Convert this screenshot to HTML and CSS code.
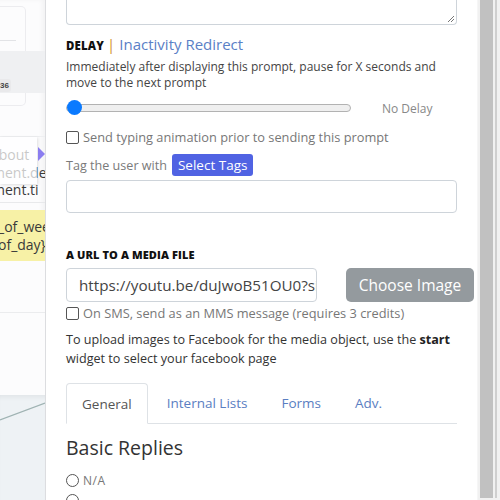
FILE: index.html
```html
<!DOCTYPE html>
<html>
<head>
<meta charset="utf-8">
<link rel="stylesheet" href="styles.css">
</head>
<body>
<div class="page">
  <div class="bg">
    <div class="bg-top">
      <div class="bg-card">
        <div class="bg-card-line"></div>
        <div class="bg-band"><span class="badge">36</span></div>
      </div>
    </div>
    <div class="bg-list">
      <div class="bg-t lt">about</div>
      <div class="bg-t dark">tment.de</div>
      <div class="bg-t dark">tment.ti</div>
      <div class="bg-pop"></div>
    </div>
    <div class="bg-yellow">
      <div class="bg-t dark">_of_wee</div>
      <div class="bg-t dark">of_day}}</div>
    </div>
    <div class="bg-blank"></div>
    <div class="bg-canvas">
      <svg width="45" height="105" viewBox="0 0 45 105"><line x1="0" y1="25" x2="45" y2="8" stroke="#9fb3b3" stroke-width="1.2"/></svg>
    </div>
  </div>
  <div class="panel">
    <div class="textarea"><svg class="grip" width="9" height="9" viewBox="0 0 9 9"><line x1="8" y1="2" x2="2" y2="8" stroke="#777" stroke-width="1"/><line x1="8" y1="5" x2="5" y2="8" stroke="#777" stroke-width="1"/></svg></div>

    <div class="delay-head"><b>DELAY</b><span class="pipe">|</span><span class="link">Inactivity Redirect</span></div>
    <p class="desc">Immediately after displaying this prompt, pause for X seconds and move to the next prompt</p>
    <div class="slider-row">
      <div class="track"><span class="thumb"></span></div>
      <span class="nodelay">No Delay</span>
    </div>
    <label class="check"><span class="box"></span>Send typing animation prior to sending this prompt</label>
    <div class="tag-row">Tag the user with <span class="btn-tags">Select Tags</span></div>
    <div class="input"></div>

    <div class="media-head">A URL TO A MEDIA FILE</div>
    <div class="media-row">
      <div class="url">https://youtu.be/duJwoB51OU0?si</div>
      <div class="btn-choose">Choose Image</div>
    </div>
    <label class="check sms"><span class="box"></span>On SMS, send as an MMS message (requires 3 credits)</label>
    <p class="fb">To upload images to Facebook for the media object, use the <b>start</b> widget to select your facebook page</p>

    <div class="tabs">
      <span class="tab active">General</span>
      <span class="tab">Internal Lists</span>
      <span class="tab">Forms</span>
      <span class="tab">Adv.</span>
    </div>
    <h2 class="replies">Basic Replies</h2>
    <label class="radio"><span class="circ"></span>N/A</label>
    <label class="radio"><span class="circ"></span></label>
  </div>
  <div class="scroll"><div class="thumb-bar"></div></div>
</div>
</body>
</html>
```
FILE: styles.css
```css
html, body { margin: 0; padding: 0; }
body { width: 500px; height: 500px; overflow: hidden; font-family: "Open Sans", "Liberation Sans", sans-serif; background: #fff; }
.page { display: flex; height: 500px; }

.bg { width: 45px; flex: none; overflow: hidden; background: #fcfcfd; border-right: 1px solid #dcdde0; box-shadow: inset -3px 0 4px rgba(0,0,0,0.04); display: flex; flex-direction: column; }
.bg-top { height: 136px; flex: none; }
.bg-card { margin-top: 6px; width: 26px; height: 100px; border: 1px solid #ececef; border-left: none; border-radius: 0 5px 5px 0; box-sizing: border-box; }
.bg-card-line { margin-top: 33px; width: 16px; border-top: 1px solid #e2e3e6; }
.bg-band { margin-top: 10px; width: 45px; height: 42px; background: #eff0f2; display: flex; align-items: flex-end; }
.badge { font: bold 8px "Liberation Sans", sans-serif; color: #444; background: #e9e9eb; padding: 2px 2px 2px 0; margin-bottom: 1px; border-radius: 0 3px 3px 0; }
.bg-list { flex: none; border-top: 1px solid #eeeff1; height: 67px; border-bottom: 1px solid #e8e9eb; box-sizing: border-box; padding-top: 9px; position: relative; }
.bg-pop { position: absolute; left: 0; top: 0; width: 37px; height: 47px; background: rgba(255,255,255,0.72); box-shadow: 1px 1px 3px rgba(0,0,0,0.12); }
.bg-pop::after { content: ""; position: absolute; left: 38px; top: 10px; border-left: 7px solid #8b7df0; border-top: 7px solid transparent; border-bottom: 7px solid transparent; }
.bg-t { font-size: 14px; line-height: 17.5px; white-space: nowrap; margin-left: -13px; color: #3a3a3a; }
.bg-t.lt { margin-left: -9px; }
.bg-yellow { flex: none; margin-top: 7px; height: 51px; background: #f7f1a6; padding-top: 8px; box-sizing: border-box; }
.bg-yellow .bg-t { margin-left: -2px; }
.bg-blank { flex: none; height: 134px; background: #fcfcfd; }
.bg-blank::before { content: ""; display: block; margin-top: 51px; border-top: 1px solid #ebecee; }
.bg-canvas { flex: 1; background: #eef2f5; box-shadow: inset 0 5px 5px -3px rgba(0,0,0,0.06); }
.bg-canvas svg { display: block; }

.panel { flex: 1; padding: 0 20px; overflow: hidden; color: #333; }
.textarea { height: 24px; border: 1px solid #ced4da; border-top: none; border-radius: 0 0 4px 4px; position: relative; }
.grip { position: absolute; right: 1px; bottom: 1px; }

.delay-head { margin-top: 9px; font-size: 15px; line-height: 20px; }
.delay-head b { font-size: 11.4px; font-weight: 800; color: #111; letter-spacing: 0.2px; }
.pipe { color: #d4912a; margin-left: 3px; }
.link { color: #5a80c6; margin-left: 4px; }
.desc { margin: 3px 0 0; font-size: 12px; line-height: 16px; color: #444; max-width: 378px; }
.slider-row { display: flex; align-items: center; margin-top: 9px; height: 16px; }
.track { width: 283px; height: 6px; background: #efefef; border: 1px solid #b2b2b2; border-radius: 4px; position: relative; }
.thumb { position: absolute; left: 0; top: -5px; width: 15px; height: 15px; border-radius: 50%; background: #0a7aff; }
.nodelay { margin-left: 31px; font-size: 12px; color: #888; }

.check { display: flex; align-items: center; margin-top: 13px; font-size: 12.8px; color: #777; line-height: 16px; }
.box { width: 11px; height: 11px; border: 1px solid #555; border-radius: 2px; margin-right: 4px; flex: none; }
.tag-row { display: flex; align-items: center; margin-top: 9px; font-size: 12.6px; color: #7a7a7a; gap: 5px; }
.btn-tags { background: #5063e3; color: #fff; font-size: 13.5px; padding: 2px 6px; border-radius: 3px; line-height: 18px; }
.input { margin-top: 4px; height: 33px; border: 1px solid #ced4da; border-radius: 4px; box-sizing: border-box; }

.media-head { margin-top: 34px; font-size: 11px; font-weight: 800; color: #111; letter-spacing: 0.1px; }
.media-row { display: flex; align-items: center; margin-top: 6px; }
.url { width: 251px; height: 34px; box-sizing: border-box; border: 1px solid #ced4da; border-radius: 4px; padding: 0 4px 0 12px; font-size: 15.2px; line-height: 32px; white-space: nowrap; overflow: hidden; color: #444; }
.btn-choose { margin-left: 29px; width: 128px; height: 34px; border-radius: 5px; background: #949a9e; color: #fff; font-size: 15.5px; line-height: 34px; text-align: center; margin-right: -17px; flex: none; }
.check.sms { margin-top: 3px; }
.fb { margin: 9px 0 0; font-size: 12.6px; line-height: 19px; color: #333; }
.fb b { color: #222; }

.tabs { display: flex; margin-top: 15px; border-bottom: 1px solid #dee2e6; height: 40px; }
.tab { padding: 0 17px; font-size: 13.5px; line-height: 40px; color: #5a7ec2; }
.tab.active { color: #555; border: 1px solid #dee2e6; border-bottom: 1px solid #fff; border-radius: 4px 4px 0 0; margin-bottom: -1px; padding: 0 15px; margin-right: 2px; }
.replies { margin: 13px 0 0; font-size: 19.5px; font-weight: 500; color: #333; line-height: 22px; }
.radio { display: flex; align-items: center; margin-top: 14px; font-size: 12px; color: #777; letter-spacing: 0.5px; height: 14px; }
.circ { width: 11px; height: 11px; border: 1px solid #555; border-radius: 50%; margin-right: 4px; flex: none; }
.radio + .radio { margin-top: 6px; }

.scroll { width: 23px; flex: none; background: #f1f1f1; display: flex; padding: 0 0 2px 2px; box-sizing: border-box; border-left: 1px solid #f6f6f6; }
.thumb-bar { width: 13px; background: #c1c1c1; border-right: 2px solid #f1f1f1; box-shadow: 2px 0 0 #cfcfcf; }
```
